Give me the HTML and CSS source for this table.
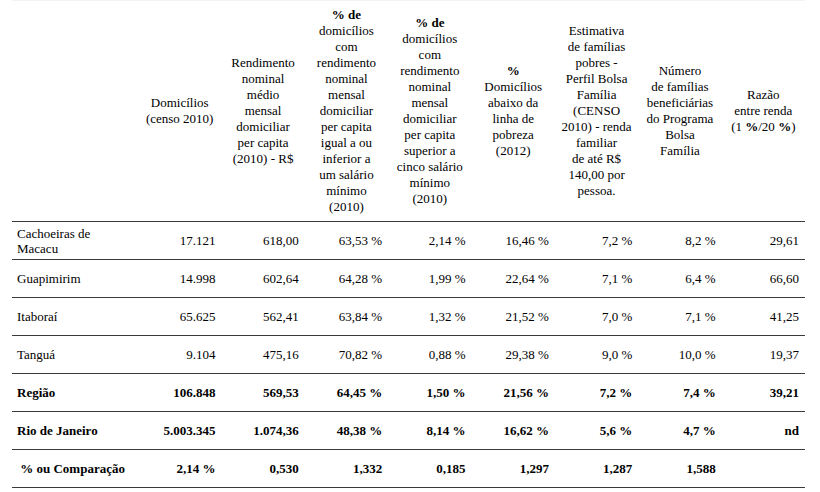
FILE: index.html
```html
<!DOCTYPE html>
<html lang="pt">
<head>
<meta charset="utf-8">
<title>Tabela</title>
<link rel="stylesheet" href="styles.css">
</head>
<body>
<table class="data">
  <colgroup>
    <col class="c-name">
    <col class="c-val"><col class="c-val"><col class="c-val"><col class="c-val">
    <col class="c-val"><col class="c-val"><col class="c-val"><col class="c-val">
  </colgroup>
  <thead>
    <tr>
      <th></th>
      <th>Domicílios<br>(censo 2010)</th>
      <th>Rendimento<br>nominal<br>médio<br>mensal<br>domiciliar<br>per capita<br>(2010) - R$</th>
      <th><b>% de</b><br>domicílios<br>com<br>rendimento<br>nominal<br>mensal<br>domiciliar<br>per capita<br>igual a ou<br>inferior a<br>um salário<br>mínimo<br>(2010)</th>
      <th><b>% de</b><br>domicílios<br>com<br>rendimento<br>nominal<br>mensal<br>domiciliar<br>per capita<br>superior a<br>cinco salário<br>mínimo<br>(2010)</th>
      <th><b>%</b><br>Domicílios<br>abaixo da<br>linha de<br>pobreza<br>(2012)</th>
      <th>Estimativa<br>de famílias<br>pobres -<br>Perfil Bolsa<br>Família<br>(CENSO<br>2010) - renda<br>familiar<br>de até R$<br>140,00 por<br>pessoa.</th>
      <th>Número<br>de famílias<br>beneficiárias<br>do Programa<br>Bolsa<br>Família</th>
      <th>Razão<br>entre renda<br>(1 <b>%</b>/20 <b>%</b>)</th>
    </tr>
  </thead>
  <tbody>
    <tr>
      <td class="name">Cachoeiras de Macacu</td>
      <td>17.121</td><td>618,00</td><td>63,53 %</td><td>2,14 %</td>
      <td>16,46 %</td><td>7,2 %</td><td>8,2 %</td><td>29,61</td>
    </tr>
    <tr>
      <td class="name">Guapimirim</td>
      <td>14.998</td><td>602,64</td><td>64,28 %</td><td>1,99 %</td>
      <td>22,64 %</td><td>7,1 %</td><td>6,4 %</td><td>66,60</td>
    </tr>
    <tr>
      <td class="name">Itaboraí</td>
      <td>65.625</td><td>562,41</td><td>63,84 %</td><td>1,32 %</td>
      <td>21,52 %</td><td>7,0 %</td><td>7,1 %</td><td>41,25</td>
    </tr>
    <tr>
      <td class="name">Tanguá</td>
      <td>9.104</td><td>475,16</td><td>70,82 %</td><td>0,88 %</td>
      <td>29,38 %</td><td>9,0 %</td><td>10,0 %</td><td>19,37</td>
    </tr>
    <tr class="bold">
      <td class="name">Região</td>
      <td>106.848</td><td>569,53</td><td>64,45 %</td><td>1,50 %</td>
      <td>21,56 %</td><td>7,2 %</td><td>7,4 %</td><td>39,21</td>
    </tr>
    <tr class="bold">
      <td class="name">Rio de Janeiro</td>
      <td>5.003.345</td><td>1.074,36</td><td>48,38 %</td><td>8,14 %</td>
      <td>16,62 %</td><td>5,6 %</td><td>4,7 %</td><td>nd</td>
    </tr>
    <tr class="bold">
      <td class="name">&nbsp;% ou Comparação</td>
      <td>2,14 %</td><td>0,530</td><td>1,332</td><td>0,185</td>
      <td>1,297</td><td>1,287</td><td>1,588</td><td></td>
    </tr>
  </tbody>
</table>
</body>
</html>
```

FILE: styles.css
```css
html, body {
  margin: 0;
  padding: 0;
  background: #ffffff;
}

body {
  font-family: "Liberation Serif", Tinos, "DejaVu Serif", serif;
  font-size: 13px;
  color: #000000;
}

.data {
  border-collapse: collapse;
  table-layout: fixed;
  width: 793px;
  margin-left: 12px;
  font-family: "Liberation Serif", Tinos, "DejaVu Serif", serif;
}

.c-name {
  width: 126px;
}

.c-val {
  width: 83.375px;
}

.data th {
  font-family: "Liberation Serif", Tinos, "DejaVu Serif", serif;
  font-weight: normal;
  text-align: center;
  vertical-align: middle;
  white-space: nowrap;
  line-height: 16px;
  height: 220px;
  padding: 0 4px;
  border-top: 1px solid #f3f3f3;
}

.data td {
  font-family: "Liberation Serif", Tinos, "DejaVu Serif", serif;
  height: 37px;
  padding: 0 6px 0 5px;
  line-height: 15px;
  text-align: right;
  vertical-align: middle;
  border-top: 1px solid #3a3a3a;
  border-bottom: 1px solid #3a3a3a;
}

.data td.name {
  text-align: left;
}

.data tr.bold td {
  font-weight: bold;
}
```
